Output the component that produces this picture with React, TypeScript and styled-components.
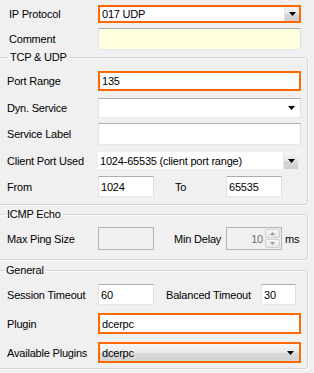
import React from "react";
import styled, { createGlobalStyle, css } from "styled-components";

const GlobalStyle = createGlobalStyle`
	html, body {
		margin: 0;
		padding: 0;
		background: #f0f0f0;
	}
	body {
		font-family: "Liberation Sans", Arial, sans-serif;
		font-size: 11px;
		color: #000;
	}
`;

const ORANGE = "#ff6a00";

const Dialog = styled.div`
	width: 314px;
	height: 373px;
	overflow: hidden;
	background: #f0f0f0;
	letter-spacing: -0.2px;
`;

const TopSection = styled.div`
	padding: 0 13px 0 9px;
`;

const Row = styled.div<{ $h: number; $mt: number; $label?: number }>`
	display: grid;
	grid-template-columns: ${(p) => p.$label ?? 91}px 1fr;
	align-items: center;
	height: ${(p) => p.$h}px;
	margin-top: ${(p) => p.$mt}px;
`;

const PairRow = styled.div<{ $h: number; $mt: number; $cols: string }>`
	display: grid;
	grid-template-columns: ${(p) => p.$cols};
	align-items: center;
	height: ${(p) => p.$h}px;
	margin-top: ${(p) => p.$mt}px;
`;

const Label = styled.span<{ $pl?: number }>`
	white-space: nowrap;
	padding-left: ${(p) => p.$pl ?? 0}px;
`;

const Group = styled.fieldset<{ $mt: number; $pb: number }>`
	margin: ${(p) => p.$mt}px 6px 0 -2px;
	padding: 0 6px ${(p) => p.$pb}px 8px;
	min-width: 0;
	border: 1px solid #d5d5d5;
	border-radius: 3px;
	box-shadow: inset 1px 1px 0 #fbfbfb, 1px 1px 0 #fbfbfb;
`;

const Legend = styled.legend<{ $indent: number }>`
	margin-left: ${(p) => p.$indent}px;
	padding: 0 2px;
	line-height: 12px;
	font-size: 11px;
`;

const Field = styled.div<{ $focus?: boolean; $bg?: string; $w?: number; $disabled?: boolean }>`
	box-sizing: border-box;
	height: 100%;
	width: ${(p) => (p.$w ? `${p.$w}px` : "100%")};
	background: ${(p) => p.$bg ?? "#fff"};
	display: flex;
	align-items: center;
	padding-left: 2px;
	white-space: nowrap;
	${(p) =>
		p.$focus
			? css`
					border: 2px solid ${ORANGE};
			  `
			: p.$disabled
			? css`
					border: 1px solid #b4b4b4;
					background: #f0f0f0;
			  `
			: css`
					border: 1px solid;
					border-color: #abadb3 #dbdfe6 #e3e9ef #e2e3ea;
			  `}
`;

type Variant = "focusButton" | "plain" | "flat" | "focusGradient";

const SelectBox = styled.div<{ $v: Variant }>`
	box-sizing: border-box;
	height: 100%;
	display: flex;
	align-items: stretch;
	white-space: nowrap;
	${(p) =>
		p.$v === "focusButton"
			? css`
					border: 2px solid ${ORANGE};
					background: #fff;
			  `
			: p.$v === "plain"
			? css`
					border: 1px solid;
					border-color: #abadb3 #dbdfe6 #e3e9ef #e2e3ea;
					background: #fff;
			  `
			: p.$v === "flat"
			? css`
					background: #fff;
					margin-right: 3px;
			  `
			: css`
					border: 2px solid ${ORANGE};
					background: linear-gradient(#f6f6f6, #e9e9e9 50%, #d9d9d9 51%, #d3d3d3);
			  `}
`;

const SelectText = styled.span`
	flex: 1;
	display: flex;
	align-items: center;
	padding-left: 2px;
	overflow: hidden;
`;

const DropButton = styled.span<{ $boxed: boolean }>`
	width: ${(p) => (p.$boxed ? 14 : 13)}px;
	display: flex;
	align-items: center;
	justify-content: center;
	margin: ${(p) => (p.$boxed ? "0" : "0 2px 0 0")};
	${(p) =>
		p.$boxed &&
		css`
			background: linear-gradient(#f5f5f5, #e8e8e8 50%, #d6d6d6 51%, #cfcfcf);
			border-left: 1px solid #e4e4e4;
		`}
`;

function Arrow({ color = "#000", w = 7, h = 4, up = false }: { color?: string; w?: number; h?: number; up?: boolean }) {
	const pts = up ? `0,${h} ${w},${h} ${w / 2},0` : `0,0 ${w},0 ${w / 2},${h}`;
	return (
		<svg width={w} height={h} viewBox={`0 0 ${w} ${h}`}>
			<polygon points={pts} fill={color} />
		</svg>
	);
}

function Select({ v, value }: { v: Variant; value?: string }) {
	const boxed = v === "focusButton" || v === "flat";
	return (
		<SelectBox $v={v}>
			<SelectText>{value}</SelectText>
			<DropButton $boxed={boxed}>
				<Arrow />
			</DropButton>
		</SelectBox>
	);
}

const Spin = styled.div`
	box-sizing: border-box;
	height: 100%;
	width: 56px;
	display: flex;
	border: 1px solid #b4b4b4;
	background: #f0f0f0;
	padding: 1px;
`;

const SpinValue = styled.span`
	flex: 1;
	display: flex;
	align-items: center;
	justify-content: flex-end;
	padding-right: 2px;
	color: #6d6d6d;
`;

const SpinButtons = styled.div`
	width: 15px;
	display: flex;
	flex-direction: column;
	gap: 1px;
`;

const SpinButton = styled.div`
	flex: 1;
	display: flex;
	align-items: center;
	justify-content: center;
	border: 1px solid #cfcfcf;
	border-radius: 2px;
	background: linear-gradient(#f6f6f6, #e6e6e6);
`;

const Unit = styled.span`
	padding-left: 3px;
`;

export default function App() {
	return (
		<Dialog>
			<GlobalStyle />
			<TopSection>
				<Row $h={18} $mt={5} $label={89}>
					<Label>IP Protocol</Label>
					<Select v="focusButton" value="017 UDP" />
				</Row>
				<Row $h={22} $mt={5} $label={89}>
					<Label>Comment</Label>
					<Field $bg="#ffffdf" />
				</Row>
			</TopSection>

			<Group $mt={1} $pb={7}>
				<Legend $indent={1}>TCP &amp; UDP</Legend>
				<Row $h={20} $mt={8}>
					<Label>Port Range</Label>
					<Field $focus>135</Field>
				</Row>
				<Row $h={20} $mt={7}>
					<Label>Dyn. Service</Label>
					<Select v="plain" />
				</Row>
				<Row $h={22} $mt={5}>
					<Label>Service Label</Label>
					<Field />
				</Row>
				<Row $h={17} $mt={7}>
					<Label>Client Port Used</Label>
					<Select v="flat" value="1024-65535 (client port range)" />
				</Row>
				<PairRow $h={21} $mt={7} $cols="91px 56px 72px 56px auto">
					<Label>From</Label>
					<Field>1024</Field>
					<Label $pl={21}>To</Label>
					<Field>65535</Field>
				</PairRow>
			</Group>

			<Group $mt={3} $pb={9}>
				<Legend $indent={-2}>ICMP Echo</Legend>
				<PairRow $h={23} $mt={7} $cols="91px 56px 72px 56px auto">
					<Label>Max Ping Size</Label>
					<Field $disabled />
					<Label $pl={20}>Min Delay</Label>
					<Spin>
						<SpinValue>10</SpinValue>
						<SpinButtons>
							<SpinButton>
								<Arrow up w={5} h={3} color="#9a9a9a" />
							</SpinButton>
							<SpinButton>
								<Arrow w={5} h={3} color="#9a9a9a" />
							</SpinButton>
						</SpinButtons>
					</Spin>
					<Unit>ms</Unit>
				</PairRow>
			</Group>

			<Group $mt={4} $pb={5}>
				<Legend $indent={-3}>General</Legend>
				<PairRow $h={21} $mt={8} $cols="91px 56px 107px 35px auto">
					<Label>Session Timeout</Label>
					<Field>60</Field>
					<Label $pl={12}>Balanced Timeout</Label>
					<Field>30</Field>
				</PairRow>
				<Row $h={21} $mt={8}>
					<Label>Plugin</Label>
					<Field $focus>dcerpc</Field>
				</Row>
				<Row $h={21} $mt={8}>
					<Label>Available Plugins</Label>
					<Select v="focusGradient" value="dcerpc" />
				</Row>
			</Group>
		</Dialog>
	);
}
